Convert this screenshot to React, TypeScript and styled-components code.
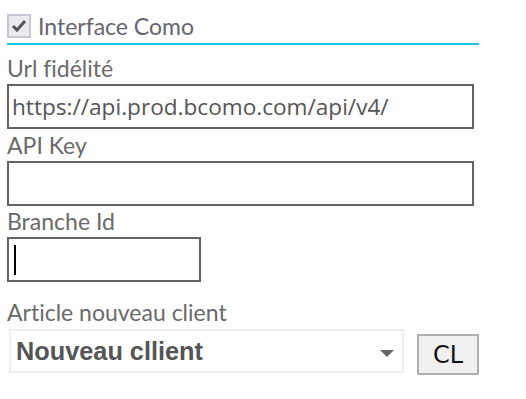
import styled, { createGlobalStyle } from 'styled-components'

const GlobalStyle = createGlobalStyle`
  html, body {
    margin: 0;
    padding: 0;
    background: #ffffff;
  }
  body {
    font-family: Lato, "Open Sans", sans-serif;
  }
`

const Panel = styled.div`
  display: flex;
  flex-direction: column;
  width: 472px;
  padding: 8px 0 0 7px;
`

const Header = styled.div`
  display: flex;
  align-items: center;
  gap: 7px;
  height: 35px;
  border-bottom: 2px solid #1bc5e6;
`

const CheckBox = styled.div`
  width: 24px;
  height: 24px;
  box-sizing: border-box;
  border: 2px solid #c8c8d2;
  background: #ebebef;
  display: flex;
  align-items: center;
  justify-content: center;
`

const HeaderTitle = styled.span`
  font-size: 23px;
  line-height: 24px;
  color: #666670;
`

const Label = styled.label<{ $gap: number }>`
  display: block;
  margin-top: ${(p) => p.$gap}px;
  margin-bottom: 4px;
  font-size: 23px;
  line-height: 24px;
  color: #6a6a6a;
  font-variant-ligatures: none;
`

const TextBox = styled.div<{ $width: number }>`
  box-sizing: border-box;
  width: ${(p) => p.$width}px;
  height: 45px;
  border: 2px solid #646464;
  padding-left: 3px;
  display: flex;
  align-items: center;
  font-family: "Open Sans", sans-serif;
  font-size: 22.6px;
  color: #555555;
  white-space: nowrap;
`

const Caret = styled.span`
  display: block;
  width: 2px;
  height: 30px;
  background: #000;
  margin-left: 2px;
`

const SelectRow = styled.div`
  display: flex;
  align-items: flex-start;
  gap: 13px;
  margin-top: 1px;
  padding-left: 2px;
`

const Select = styled.div`
  box-sizing: border-box;
  width: 395px;
  height: 44px;
  border: 2px solid #eeeeee;
  display: flex;
  align-items: center;
  justify-content: space-between;
  padding: 0 8px 0 5px;
  font-family: "Liberation Sans", Arial, sans-serif;
  font-weight: bold;
  font-size: 25.3px;
  color: #555555;
`

const Arrow = styled.span`
  width: 0;
  height: 0;
  border-left: 7px solid transparent;
  border-right: 7px solid transparent;
  border-top: 7px solid #666666;
  margin-top: 4px;
`

const Button = styled.button`
  box-sizing: border-box;
  width: 62px;
  height: 41px;
  margin-top: 5px;
  border: 2px solid #b0b0b0;
  background: #f0f0f0;
  font-family: "DejaVu Sans", sans-serif;
  font-size: 24px;
  color: #111;
  padding: 0;
`

export default function App() {
  return (
    <>
      <GlobalStyle />
      <Panel>
        <Header>
          <CheckBox>
            <svg width="16" height="14" viewBox="0 0 16 14">
              <path d="M2 7 L6 11 L14 2" fill="none" stroke="#555" strokeWidth="3" />
            </svg>
          </CheckBox>
          <HeaderTitle>Interface Como</HeaderTitle>
        </Header>

        <Label $gap={11}>Url fidélité</Label>
        <TextBox $width={467}>https://api.prod.bcomo.com/api/v4/</TextBox>

        <Label $gap={4}>API Key</Label>
        <TextBox $width={467} />

        <Label $gap={3}>Branche Id</Label>
        <TextBox $width={194}>
          <Caret />
        </TextBox>

        <Label $gap={18}>Article nouveau client</Label>
        <SelectRow>
          <Select>
            <span>Nouveau cllient</span>
            <Arrow />
          </Select>
          <Button>CL</Button>
        </SelectRow>
      </Panel>
    </>
  )
}
